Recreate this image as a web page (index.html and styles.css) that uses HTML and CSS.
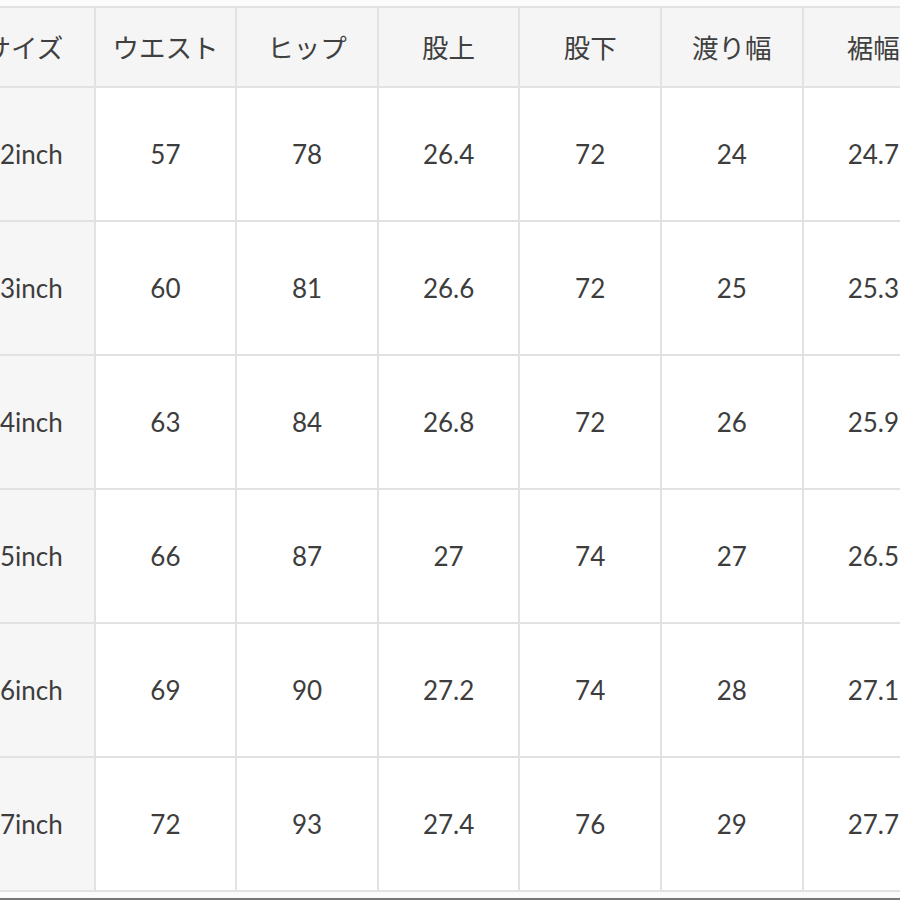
FILE: index.html
```html
<!DOCTYPE html>
<html lang="ja">
<head>
<meta charset="utf-8">
<link rel="stylesheet" href="styles.css">
</head>
<body>
<div class="page">
  <div class="table">
    <div class="cell head">サイズ</div>
    <div class="cell head">ウエスト</div>
    <div class="cell head">ヒップ</div>
    <div class="cell head">股上</div>
    <div class="cell head">股下</div>
    <div class="cell head">渡り幅</div>
    <div class="cell head">裾幅</div>

    <div class="cell label">22inch</div>
    <div class="cell">57</div><div class="cell">78</div><div class="cell">26.4</div><div class="cell">72</div><div class="cell">24</div><div class="cell">24.7</div>

    <div class="cell label">23inch</div>
    <div class="cell">60</div><div class="cell">81</div><div class="cell">26.6</div><div class="cell">72</div><div class="cell">25</div><div class="cell">25.3</div>

    <div class="cell label">24inch</div>
    <div class="cell">63</div><div class="cell">84</div><div class="cell">26.8</div><div class="cell">72</div><div class="cell">26</div><div class="cell">25.9</div>

    <div class="cell label">25inch</div>
    <div class="cell">66</div><div class="cell">87</div><div class="cell">27</div><div class="cell">74</div><div class="cell">27</div><div class="cell">26.5</div>

    <div class="cell label">26inch</div>
    <div class="cell">69</div><div class="cell">90</div><div class="cell">27.2</div><div class="cell">74</div><div class="cell">28</div><div class="cell">27.1</div>

    <div class="cell label">27inch</div>
    <div class="cell">72</div><div class="cell">93</div><div class="cell">27.4</div><div class="cell">76</div><div class="cell">29</div><div class="cell">27.7</div>
  </div>
  <div class="edge"></div>
</div>
</body>
</html>
```

FILE: styles.css
```css
html, body {
  margin: 0;
  padding: 0;
  background: #fbfbfb;
  overflow: hidden;
}

.page {
  width: 900px;
  height: 900px;
  overflow: hidden;
  display: flex;
  flex-direction: column;
  background: #fbfbfb;
}

.table {
  margin-top: 6px;
  margin-left: -46px;
  width: 995px;
  display: grid;
  grid-template-columns: repeat(7, 139.6px);
  grid-template-rows: 78px repeat(6, 132px);
  gap: 2px;
  padding: 2px 0;
  background: #e2e2e2;
  flex: none;
}

.cell {
  display: flex;
  align-items: center;
  justify-content: center;
  background: #ffffff;
  color: #3d3d3d;
  font-family: Lato, "Noto Sans CJK JP", sans-serif;
  font-size: 26px;
  white-space: nowrap;
}

.head {
  background: #f5f5f5;
  font-family: "Noto Sans CJK JP", sans-serif;
  font-size: 26.5px;
  color: #404040;
  padding-bottom: 2px;
}

.label {
  background: #f6f6f6;
}

.edge {
  margin-top: auto;
  height: 2px;
  background: #777777;
  flex: none;
}
```
